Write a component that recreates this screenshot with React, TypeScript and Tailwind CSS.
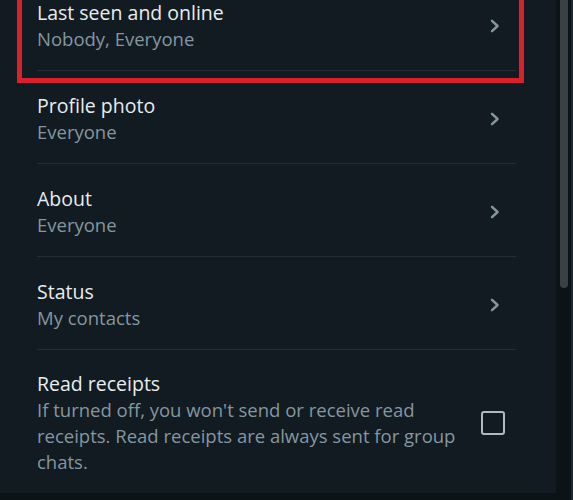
import React from "react";

const rows = [
  { title: "Last seen and online", sub: "Nobody, Everyone" },
  { title: "Profile photo", sub: "Everyone" },
  { title: "About", sub: "Everyone" },
  { title: "Status", sub: "My contacts" },
];

const Chevron = () => (
  <svg width="10" height="14" viewBox="0 0 10 14" className="shrink-0">
    <polyline points="2,1.8 7.6,7 2,12.2" fill="none" stroke="#8696a0" strokeWidth="2.4" strokeLinecap="round" strokeLinejoin="round" />
  </svg>
);

export default function App() {
  return (
    <div
      className="w-[573px] h-[500px] overflow-hidden flex bg-[#111b21]"
      style={{ fontFamily: '"Segoe UI", "Open Sans", "Noto Sans", sans-serif' }}
    >
      {/* Privacy list */}
      <div className="relative flex-1 flex flex-col">
        <div className="flex-1 -mt-[22px]">
          {rows.map((r) => (
            <div key={r.title} className="pl-[37px] pr-[40px]">
              <div className="flex items-center justify-between pt-[22px] pb-[18px] pr-[16px] border-b border-[#222d34]">
                <div>
                  <div className="text-[19.5px] leading-[26px] text-[#e9edef]">{r.title}</div>
                  <div className="text-[18.5px] leading-[26px] text-[#8696a0]">{r.sub}</div>
                </div>
                <Chevron />
              </div>
            </div>
          ))}

          {/* Read receipts */}
          <div className="pl-[37px] pr-[51px] pt-[21px] pb-[17px] flex items-center justify-between">
            <div className="w-[428px]">
              <div className="text-[19.5px] leading-[26px] text-[#e9edef]">Read receipts</div>
              <div className="text-[18.5px] leading-[26px] text-[#8696a0]">
                If turned off, you won't send or receive read receipts. Read receipts are always sent for group chats.
              </div>
            </div>
            <div className="w-[24px] h-[24px] rounded-[3px] border-2 border-[#aebac1] shrink-0" />
          </div>
        </div>
        <div className="h-[7px] bg-[#0c1317] shrink-0" />

        {/* highlight annotation */}
        <div className="absolute left-[17px] top-[-10px] w-[507px] h-[93px] border-[5px] border-[#d9212e] pointer-events-none" />
      </div>

      {/* Scrollbar */}
      <div className="w-[17px] h-full bg-[#0c1317] flex shrink-0">
        <div className="w-[4px]" />
        <div className="w-[8px] h-[288px] bg-[#3b4044] rounded-b-[4px]" />
        <div className="w-[3px]" />
        <div className="w-[2px] h-full bg-[#1e2a30]" />
      </div>
    </div>
  );
}
